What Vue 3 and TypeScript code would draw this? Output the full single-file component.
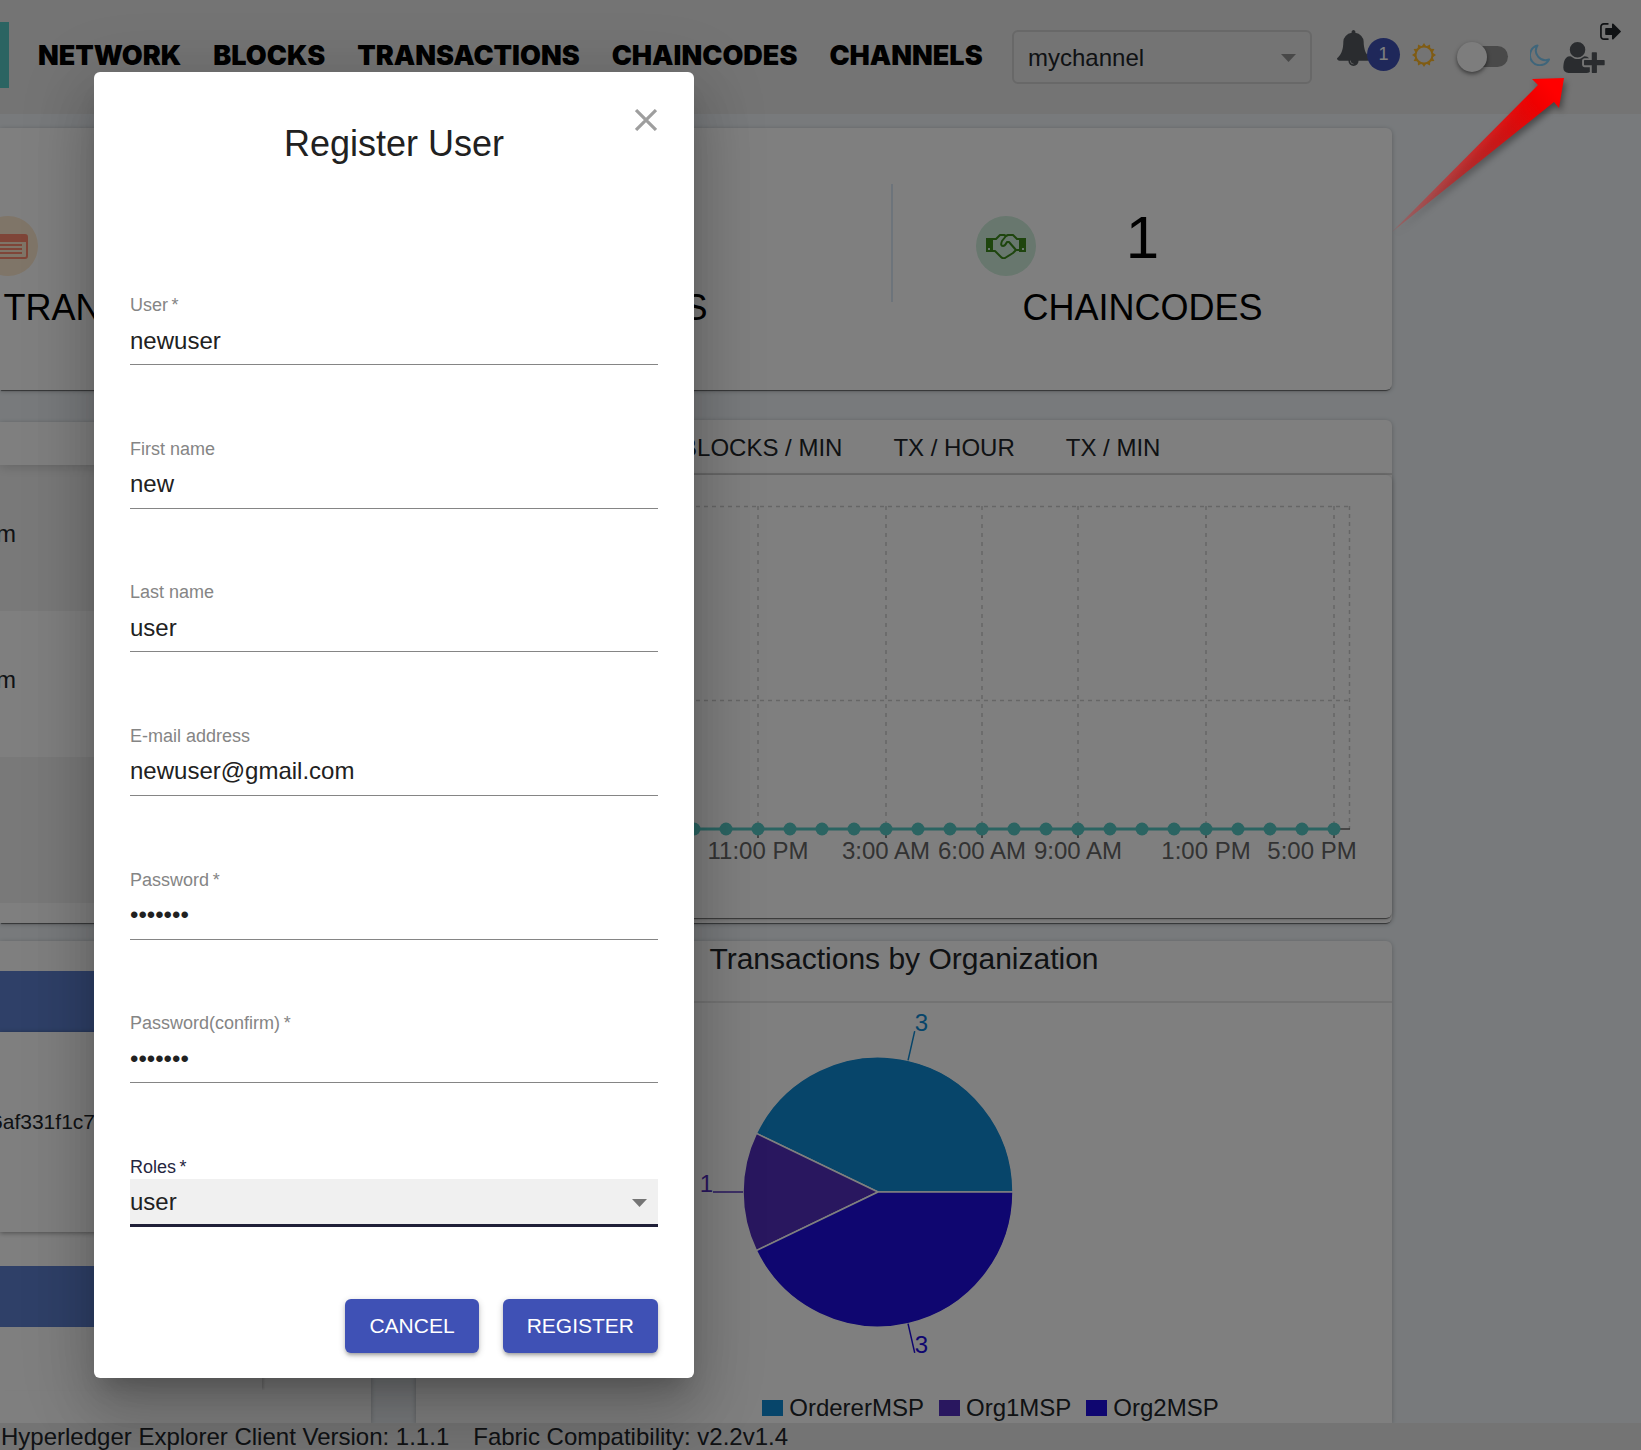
<script setup lang="ts">
import { ref } from 'vue'

interface Field {
  id: string
  label: string
  type: string
  value: string
}

const navItems: string[] = ['NETWORK', 'BLOCKS', 'TRANSACTIONS', 'CHAINCODES', 'CHANNELS']

const channel = ref('mychannel')
const role = ref('user')
const darkMode = ref(false)

const fields = ref<Field[]>([
  { id: 'user', label: 'User\u2009*', type: 'text', value: 'newuser' },
  { id: 'first-name', label: 'First name', type: 'text', value: 'new' },
  { id: 'last-name', label: 'Last name', type: 'text', value: 'user' },
  { id: 'email', label: 'E-mail address', type: 'text', value: 'newuser@gmail.com' },
  { id: 'password', label: 'Password\u2009*', type: 'password', value: 'newuser' },
  { id: 'password-confirm', label: 'Password(confirm)\u2009*', type: 'password', value: 'newuser' },
])

const tabs: string[] = ['BLOCKS / HOUR', 'BLOCKS / MIN', 'TX / HOUR', 'TX / MIN']

// Hourly chart geometry, in chart units
const lastX = 918
const step = 32
const points: number[] = Array.from({ length: 27 }, (_, i) => lastX - i * step)
const ticks = [
  { x: 342, label: '11:00 PM', at: 342 },
  { x: 470, label: '3:00 AM', at: 470 },
  { x: 566, label: '6:00 AM', at: 566 },
  { x: 662, label: '9:00 AM', at: 662 },
  { x: 790, label: '1:00 PM', at: 790 },
  { x: 918, label: '5:00 PM', at: 896 },
]

const orgs = [
  { name: 'OrdererMSP', color: '#0e8ad4', count: 3 },
  { name: 'Org1MSP', color: '#522fbe', count: 1 },
  { name: 'Org2MSP', color: '#1e0ce0', count: 3 },
]

const cx = 462
const cy = 190
const radius = 135
const total = orgs.reduce((sum, o) => sum + o.count, 0)

function polar(angle: number, r: number): { x: number; y: number } {
  return { x: cx + r * Math.cos(angle), y: cy - r * Math.sin(angle) }
}

let turned = 0
const slices = orgs.map((org) => {
  const start = (turned / total) * Math.PI * 2
  turned += org.count
  const end = (turned / total) * Math.PI * 2
  const mid = (start + end) / 2
  const a = polar(start, radius)
  const b = polar(end, radius)
  const from = polar(mid, radius)
  const to = polar(mid, radius + 30)
  const right = to.x > cx
  return {
    ...org,
    path: `M${cx} ${cy}L${a.x} ${a.y}A${radius} ${radius} 0 0 0 ${b.x} ${b.y}Z`,
    from,
    to,
    anchor: right ? 'start' : 'end',
  }
})

const rays: string = Array.from({ length: 12 }, (_, i) => {
  const a = (i * Math.PI) / 6
  const p = (angle: number, r: number) =>
    `${(12 + r * Math.cos(angle)).toFixed(2)} ${(12 + r * Math.sin(angle)).toFixed(2)}`
  return `M${p(a - 0.24, 9)}L${p(a, 12)}L${p(a + 0.24, 9)}Z`
}).join('')
</script>

<template>
  <div class="app">
    <header class="topbar">
      <div class="logo"></div>
      <nav class="nav">
        <a v-for="item in navItems" :key="item" href="#">{{ item }}</a>
      </nav>
      <div class="tools">
        <div class="channel">
          <select v-model="channel" aria-label="Channel">
            <option>mychannel</option>
          </select>
          <svg class="caret" viewBox="0 0 15 8"><path d="M0 0h15L7.500 8z" /></svg>
        </div>
        <button class="icon-btn bell" type="button" aria-label="Notifications">
          <svg viewBox="64 -16 1664 1808"><path d="M912 1696q0-16-16-16-59 0-101.500-42.500T752 1536q0-16-16-16t-16 16q0 73 51.500 124.500T896 1712q16 0 16-16zm816-288q0 52-38 90t-90 38h-448q0 106-75 181t-181 75-181-75-75-181H192q-52 0-90-38t-38-90q50-42 91-88t85-119.500 74.500-158.500 50-206T384 560q0-152 117-282.500T808 119q-8-19-8-39 0-40 28-68t68-28 68 28 28 68q0 20-8 39 190 28 307 158.500T1408 560q0 139 19.500 258t50 206 74.500 158.500 85 119.500 91 88z" /></svg>
          <span class="badge">1</span>
        </button>
        <svg class="sun" viewBox="0 0 24 24">
          <circle cx="12" cy="12" r="8.500" /><path :d="rays" />
        </svg>
        <input v-model="darkMode" class="switch" type="checkbox" aria-label="Dark mode" />
        <svg class="moon" viewBox="0 0 20 22">
          <path d="M7.500 1.500A10 10 0 1 0 19 15.500 A9.500 9.500 0 0 1 7.500 1.500z" />
        </svg>
        <button class="icon-btn user-add" type="button" aria-label="Register user">
          <svg viewBox="0 128 2048 1536"><path d="M704 896q-159 0-271.500-112.500T320 512t112.500-271.500T704 128t271.500 112.500T1088 512 975.500 783.500 704 896zm960 128h352q13 0 22.500 9.500t9.500 22.500v192q0 13-9.500 22.500t-22.500 9.500h-352v352q0 13-9.500 22.500t-22.500 9.500h-192q-13 0-22.500-9.500t-9.500-22.500v-352h-352q-13 0-22.500-9.500t-9.500-22.500v-192q0-13 9.500-22.500t22.500-9.500h352V672q0-13 9.500-22.500t22.500-9.500h192q13 0 22.500 9.500t9.500 22.500v352zm-736 224q0 52 38 90t90 38h256v238q-68 50-171 50H267q-121 0-194-69T0 1405q0-53 3.500-103.500t14-109T44 1084t43-97.500 62-81 85.500-53.500T346 832q19 0 39 17 79 61 154.500 91.500T704 971t164.500-30.500T1023 849q20-17 39-17 132 0 217 96h-223q-52 0-90 38t-38 90v192z" /></svg>
        </button>
      </div>
      <button class="icon-btn sign-out" type="button" aria-label="Sign out">
        <svg viewBox="64 256 1568 1280"><path d="M704 1440q0 4 1 20t.5 26.500-3 23.500-10 19.500-20.500 6.500h-320q-119 0-203.500-84.500T64 1248V544q0-119 84.500-203.500T352 256h320q13 0 22.500 9.500t9.500 22.500q0 4 1 20t.5 26.500-3 23.500-10 19.500T672 384H352q-66 0-113 47t-47 113v704q0 66 47 113t113 47h312l11.500 1 11.500 3 8 5.500 7 9 2 13.500zm928-544q0 26-19 45l-544 544q-19 19-45 19t-45-19-19-45v-288H512q-26 0-45-19t-19-45V704q0-26 19-45t45-19h448V352q0-26 19-45t45-19 45 19l544 544q19 19 19 45z" /></svg>
      </button>
    </header>

    <main class="dashboard">
      <section class="card stats">
        <div class="stat">
          <div class="stat-top">
            <span class="stat-icon orange">
              <svg viewBox="0 0 40 26">
                <rect x="1" y="2" width="38" height="23" rx="2" fill="none" stroke="currentColor" stroke-width="2" />
                <path fill="currentColor" d="M1 2h38v7H1zM6 11h28v2H6zM6 15h28v2H6zM6 19h28v2H6z" />
              </svg>
            </span>
            <span class="stat-value">7</span>
          </div>
          <div class="stat-label">TRANSACTIONS</div>
        </div>
        <div class="stat">
          <div class="stat-top">
            <span class="stat-icon"></span>
            <span class="stat-value">4</span>
          </div>
          <div class="stat-label">NODES</div>
        </div>
        <div class="stat">
          <div class="stat-top">
            <span class="stat-icon green">
              <svg viewBox="0 0 40 26">
                <path fill="currentColor" fill-rule="evenodd" d="M0 5h7v14H0zM2 15v2h2v-2zM33 5h7v14h-7zM36 15v2h2v-2z" />
                <path fill="none" stroke="currentColor" stroke-width="2" stroke-linejoin="round" stroke-linecap="round" d="M7 6h3l4-4h4l2 1 2-1h5l4 4h3M7 18h2l6 6q2 2 4 1l8-5 3-3h3M20 3l-4 5q-2 5 1 5 2 0 4-4h2l7 8" />
              </svg>
            </span>
            <span class="stat-value">1</span>
          </div>
          <div class="stat-label">CHAINCODES</div>
        </div>
      </section>

      <div class="row activity">
        <section class="card peers">
          <div class="peers-head"></div>
          <div class="peer shaded"><span>m</span></div>
          <div class="peer"><span>m</span></div>
          <div class="peer shaded"></div>
        </section>
        <section class="card metrics">
          <div class="tabs">
            <a v-for="tab in tabs" :key="tab" href="#">{{ tab }}</a>
          </div>
          <div class="card chart">
            <svg viewBox="0 0 976 443">
              <g class="grid-lines">
                <path d="M80 31.500H934M80 225.500H934M933.500 31V354" />
                <path v-for="t in ticks" :key="t.x" :d="`M${t.x} 31V354`" />
              </g>
              <path class="axis" d="M80 354H934" />
              <path v-for="t in ticks" :key="t.label" class="axis" :d="`M${t.x} 354v9`" />
              <path class="series" :d="`M${points[points.length - 1]} 354H${lastX}`" />
              <circle v-for="x in points" :key="x" class="dot" :cx="x" cy="354" r="6.500" />
              <text v-for="t in ticks" :key="t.at" :x="t.at" y="384">{{ t.label }}</text>
            </svg>
          </div>
        </section>
      </div>

      <div class="row details">
        <section class="card timeline">
          <article class="block">
            <div class="block-band"></div>
            <div class="block-body"><span>6af331f1c7</span></div>
          </article>
          <article class="block">
            <div class="block-band"></div>
            <div class="block-tag"></div>
          </article>
        </section>
        <section class="card by-org">
          <h3>Transactions by Organization</h3>
          <svg class="pie" viewBox="0 1 976 389">
            <path v-for="s in slices" :key="s.name" :d="s.path" :fill="s.color" stroke="#fff" stroke-width="1.500" />
            <g v-for="s in slices" :key="s.name">
              <path :d="`M${s.from.x} ${s.from.y}L${s.to.x} ${s.to.y}`" :stroke="s.color" stroke-width="1.500" />
              <text :x="s.to.x" :y="s.to.y" :text-anchor="s.anchor" :fill="s.color">{{ s.count }}</text>
            </g>
          </svg>
          <ul class="legend">
            <li v-for="o in orgs" :key="o.name">
              <span class="swatch" :style="{ background: o.color }"></span>{{ o.name }}
            </li>
          </ul>
        </section>
      </div>
    </main>

    <footer class="footer">
      <span>Hyperledger Explorer Client Version: 1.1.1</span>
      <span>Fabric Compatibility: v2.2v1.4</span>
    </footer>

    <div class="backdrop">
      <form class="dialog" role="dialog" aria-labelledby="dialog-title" @submit.prevent>
        <button class="close" type="button" aria-label="Close">
          <svg viewBox="0 0 21 21"><path d="M1 1l19 19M20 1L1 20" /></svg>
        </button>
        <h2 id="dialog-title">Register User</h2>
        <div class="fields">
          <div v-for="f in fields" :key="f.id" class="field">
            <label :for="f.id">{{ f.label }}</label>
            <input :id="f.id" v-model="f.value" :type="f.type" />
          </div>
          <div class="field focused">
            <label for="roles">Roles&#8201;*</label>
            <select id="roles" v-model="role">
              <option>user</option>
            </select>
            <svg class="caret" viewBox="0 0 15 8"><path d="M0 0h15L7.500 8z" /></svg>
          </div>
        </div>
        <div class="actions">
          <button type="button">CANCEL</button>
          <button type="submit">REGISTER</button>
        </div>
      </form>
    </div>

    <svg class="pointer" viewBox="0 0 172 155">
      <defs>
        <linearGradient id="pointer-fade" gradientUnits="userSpaceOnUse" x1="0" y1="155" x2="160" y2="12">
          <stop offset="0" stop-color="#f00" stop-opacity="0.150" />
          <stop offset="0.500" stop-color="#e80808" stop-opacity="0.650" />
          <stop offset="0.900" stop-color="#f00000" />
          <stop offset="1" stop-color="#f00" />
        </linearGradient>
      </defs>
      <path fill="url(#pointer-fade)" d="M0 155L146 8l-6-6L172 1l-5 30-5-6z" />
    </svg>
  </div>
</template>

<style>
body {
  background: #f0f5f9;
}
</style>

<style scoped>
.app {
  position: relative;
  display: flex;
  flex-direction: column;
  min-height: 100vh;
  overflow: hidden;
  background: #f0f5f9;
  color: #212529;
  font-family: "Liberation Sans", Arial, sans-serif;
  font-size: 24px;
}
.app * {
  box-sizing: border-box;
}
a {
  color: inherit;
  text-decoration: none;
}
button,
input,
select {
  margin: 0;
  font: inherit;
  color: inherit;
}

.topbar {
  position: relative;
  display: flex;
  align-items: center;
  height: 114px;
  padding-right: 36px;
  background: #e8e8e8;
}
.logo {
  width: 9px;
  height: 66px;
  margin-bottom: 4px;
  background: #56c8c4;
}
.nav {
  display: flex;
  gap: 32px;
  margin: 0 0 4px 29px;
  color: #000;
  font-family: Inter, "Arial Black", sans-serif;
  font-weight: 900;
  font-size: 27px;
}
.tools {
  display: flex;
  align-items: center;
  margin-left: auto;
}
.channel {
  position: relative;
  width: 300px;
}
.channel select {
  display: block;
  width: 100%;
  height: 54px;
  padding: 0 14px;
  border: 2px solid #d0d0d0;
  border-radius: 6px;
  appearance: none;
  background: none;
}
.caret {
  position: absolute;
  right: 16px;
  width: 15px;
  height: 8px;
  fill: #757575;
  pointer-events: none;
}
.channel .caret {
  top: 24px;
  fill: #909090;
}
.icon-btn {
  padding: 0;
  border: 0;
  background: none;
}
.icon-btn svg {
  display: block;
  width: 100%;
  height: 100%;
  fill: #54595e;
}
.bell {
  position: relative;
  width: 33px;
  height: 36px;
  margin: 0 42px 18px 25px;
}
.badge {
  position: absolute;
  top: 8px;
  left: 30px;
  width: 33px;
  height: 33px;
  border-radius: 50%;
  background: #3f51b5;
  color: #fff;
  font-size: 18px;
  line-height: 33px;
  text-align: center;
}
.sun {
  width: 24px;
  height: 24px;
  margin-bottom: 4px;
  fill: #ffb829;
}
.sun circle {
  fill: none;
  stroke: #ffb829;
  stroke-width: 2;
}
.switch {
  position: relative;
  width: 51px;
  height: 30px;
  margin-left: 21px;
  appearance: none;
}
.switch::before {
  content: "";
  position: absolute;
  inset: 4px 0 5px 6px;
  border-radius: 11px;
  background: #929292;
}
.switch::after {
  content: "";
  position: absolute;
  top: 0;
  left: 0;
  width: 30px;
  height: 30px;
  border-radius: 50%;
  background: #fafafa;
  box-shadow: 0 2px 4px rgba(0, 0, 0, 0.5);
}
.moon {
  width: 20px;
  height: 22px;
  margin: 0 0 4px 22px;
  fill: none;
  stroke: #7ecbf5;
  stroke-width: 2;
  stroke-linejoin: round;
}
.user-add {
  width: 42px;
  height: 31px;
  margin-left: 13px;
}
.sign-out {
  position: absolute;
  top: 23px;
  right: 20px;
  width: 21px;
  height: 17px;
}
.sign-out svg {
  fill: #212529;
}

.dashboard {
  display: flex;
  flex: 1;
  flex-direction: column;
  margin-right: 249px;
  padding-top: 14px;
}
.card {
  border-radius: 0 6px 6px 0;
  background: #fff;
  box-shadow: 0 2px 1px -1px rgba(0, 0, 0, 0.5), 0 1px 5px rgba(0, 0, 0, 0.25);
}
.stats {
  display: flex;
  justify-content: flex-end;
  overflow: hidden;
  height: 262px;
  padding: 56px 0;
}
.stat {
  flex: 0 0 499px;
  height: 118px;
  color: #000;
  text-align: center;
}
.stat:last-child {
  box-shadow: -2px 0 0 #dae8f6;
}
.stat-top {
  display: grid;
  grid-template-columns: 1fr auto 1fr;
  align-items: center;
  height: 96px;
  padding-top: 24px;
}
.stat-icon {
  display: grid;
  place-items: center;
  justify-self: end;
  width: 60px;
  height: 60px;
  margin-right: 90px;
  border-radius: 50%;
}
.stat-icon svg {
  width: 40px;
  height: 26px;
}
.orange {
  background: #ffead0;
  color: #ff8a70;
}
.green {
  background: #d0efdc;
  color: #3c8a1c;
}
.stat-value {
  font-size: 60px;
  line-height: 60px;
  padding-bottom: 16px;
}
.stat-label {
  margin-top: 8px;
  font-size: 36px;
  line-height: 40px;
}

.row {
  display: grid;
  grid-template-columns: 371px 1fr;
  gap: 45px;
}
.activity {
  height: 503px;
  margin-top: 30px;
}
.peers {
  margin-top: 2px;
  overflow: hidden;
}
.peers-head {
  position: relative;
  height: 43px;
  box-shadow: 0 1px 12px rgba(0, 0, 0, 0.2);
}
.peer {
  display: flex;
  align-items: center;
  justify-content: flex-end;
  height: 146px;
  padding: 0 355px 8px 0;
}
.shaded {
  background: #f3f3f3;
}
.tabs {
  display: flex;
  gap: 51px;
  height: 55px;
  padding: 0 26px;
  line-height: 56px;
  border-bottom: 2px solid #dadada;
}
.chart svg {
  display: block;
  width: 100%;
  overflow: hidden;
}
.grid-lines path {
  fill: none;
  stroke: #ccc;
  stroke-width: 1.5;
  stroke-dasharray: 4 5;
}
.grid-lines path:first-child {
  stroke-dasharray: 4 4;
}
.axis {
  stroke: #666;
  stroke-width: 1.5;
}
.series {
  stroke: #56c8c4;
  stroke-width: 3;
}
.dot {
  fill: #56c8c4;
}
.chart text {
  fill: #666;
  text-anchor: middle;
}

.details {
  flex: 1;
  margin-top: 18px;
}
.timeline,
.by-org {
  border-bottom-right-radius: 0;
}
.timeline {
  padding-top: 30px;
}
.block + .block {
  margin-top: 34px;
}
.block-band {
  height: 61px;
  background: #5e81d0;
}
.block-body {
  display: flex;
  align-items: flex-start;
  justify-content: flex-end;
  height: 200px;
  padding: 78px 276px 0 0;
  font-size: 21px;
  line-height: 24px;
  box-shadow: 0 1px 5px rgba(0, 0, 0, 0.4);
}
.block-tag {
  width: 262px;
  height: 63px;
  box-shadow: 3px 0 2px -1px rgba(0, 0, 0, 0.15);
}
.by-org h3 {
  height: 62px;
  margin: 0;
  border-bottom: 2px solid #e6e6e6;
  font-size: 30px;
  font-weight: 400;
  line-height: 36px;
  text-align: center;
}
.pie {
  display: block;
  width: 100%;
}
.legend {
  display: flex;
  justify-content: center;
  gap: 15px;
  margin: 0;
  padding: 2px 0 1px 173px;
  list-style: none;
  line-height: 28px;
}
.legend li {
  display: flex;
  align-items: center;
  gap: 6px;
}
.swatch {
  width: 21px;
  height: 16px;
}

.footer {
  display: flex;
  gap: 24px;
  height: 27px;
  padding-left: 1px;
  overflow: hidden;
  background: #e8e8e8;
  line-height: 28px;
}

.backdrop {
  position: absolute;
  inset: 0;
  padding: 72px 94px;
  background: rgba(0, 0, 0, 0.5);
}
.dialog {
  position: relative;
  width: 600px;
  max-width: 100%;
  padding: 48px 36px 25px;
  border-radius: 6px;
  background: #fff;
  color: #212121;
  box-shadow: 0 16px 22px -10px rgba(0, 0, 0, 0.2), 0 36px 57px 4px rgba(0, 0, 0, 0.14),
    0 14px 69px 12px rgba(0, 0, 0, 0.12);
}
.dialog h2 {
  margin: 0 0 125px;
  font-size: 36px;
  font-weight: 400;
  line-height: 48px;
  text-align: center;
}
.close {
  position: absolute;
  top: 37px;
  right: 37px;
  padding: 0;
  border: 0;
  background: none;
}
.close svg {
  display: block;
  width: 22px;
  height: 22px;
  stroke: #9e9e9e;
  stroke-width: 3;
}
.fields {
  display: flex;
  flex-direction: column;
  justify-content: space-between;
  min-height: 934px;
}
.field {
  position: relative;
  display: flex;
  flex-direction: column;
}
.field label {
  color: #858585;
  font-size: 18px;
  line-height: 24px;
}
.field input,
.field select {
  width: 100%;
  height: 48px;
  padding: 0;
  border: 0;
  border-bottom: 1px solid #858585;
  border-radius: 0;
  outline: 0;
  appearance: none;
  background: none;
}
.field.focused label {
  color: #26263f;
}
.field.focused select {
  border-bottom: 3px solid #1f1f37;
  background: #f0f0f0;
}
.field .caret {
  right: 11px;
  bottom: 20px;
}
.actions {
  display: flex;
  justify-content: flex-end;
  gap: 24px;
  margin-top: 72px;
}
.actions button {
  height: 54px;
  padding: 0 24px;
  border: 0;
  border-radius: 6px;
  background: #3f51b5;
  color: #fff;
  font-size: 21px;
  font-weight: 500;
  box-shadow: 0 2px 7px rgba(0, 0, 0, 0.2), 0 3px 3px rgba(0, 0, 0, 0.14), 0 4px 2px -3px rgba(0, 0, 0, 0.12);
}

.pointer {
  position: absolute;
  top: 77px;
  right: 77px;
  width: 172px;
  height: 155px;
  overflow: visible;
  filter: drop-shadow(2px 4px 3px rgba(0, 0, 0, 0.4));
  pointer-events: none;
}
</style>
